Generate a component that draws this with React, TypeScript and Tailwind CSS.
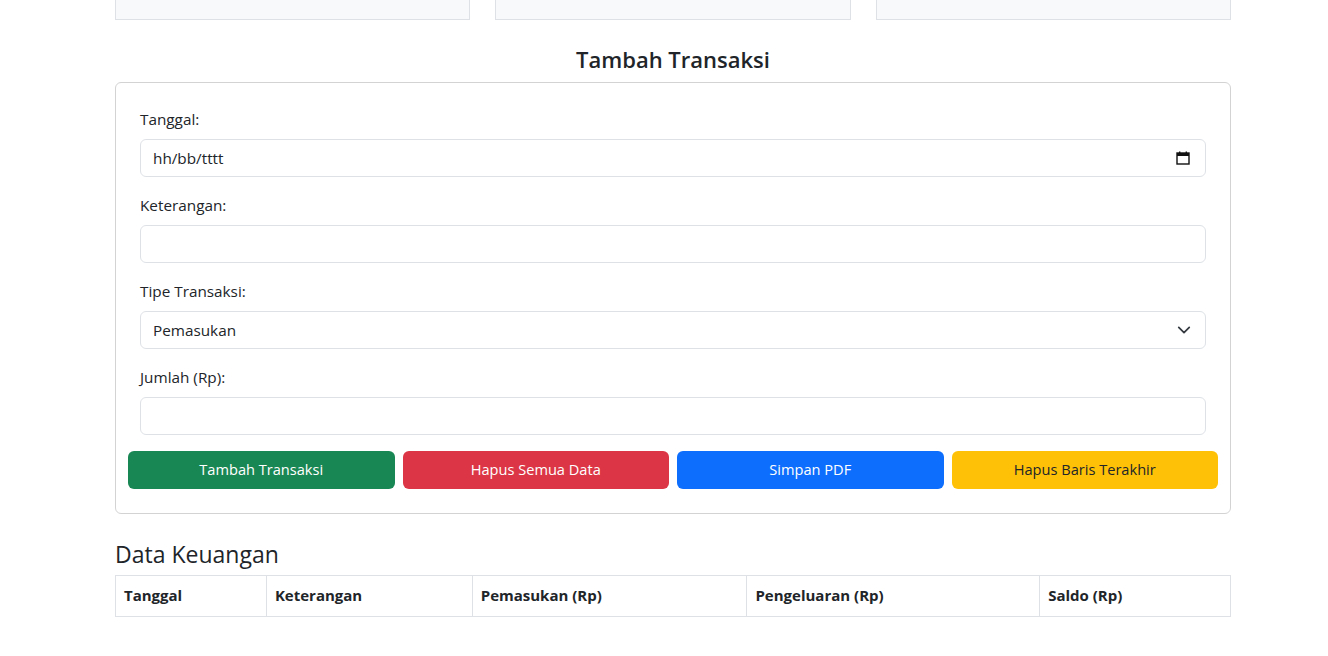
import React from "react";

const summaryCards = [
  { title: "Total Pemasukan", value: "Rp 0" },
  { title: "Total Pengeluaran", value: "Rp 0" },
  { title: "Saldo Akhir", value: "Rp 0" },
];

const actionButtons = [
  { label: "Tambah Transaksi", cls: "bg-[#198754] text-white" },
  { label: "Hapus Semua Data", cls: "bg-[#dc3545] text-white" },
  { label: "Simpan PDF", cls: "bg-[#0d6efd] text-white" },
  { label: "Hapus Baris Terakhir", cls: "bg-[#ffc107] text-[#212529]" },
];

const columns = [
  { label: "Tanggal", w: "w-[151px]" },
  { label: "Keterangan", w: "w-[206px]" },
  { label: "Pemasukan (Rp)", w: "w-[275px]" },
  { label: "Pengeluaran (Rp)", w: "w-[293px]" },
  { label: "Saldo (Rp)", w: "w-[191px]" },
];

const CalendarIcon = () => (
  <svg width="14" height="14" viewBox="0 0 14 14" fill="none">
    <rect x="1" y="2" width="12" height="11" stroke="#111" strokeWidth="1.4" fill="none" />
    <rect x="1" y="2" width="12" height="3" fill="#111" />
    <rect x="3" y="0.5" width="1.4" height="2" fill="#111" />
    <rect x="9.6" y="0.5" width="1.4" height="2" fill="#111" />
  </svg>
);

const Chevron = () => (
  <svg width="14" height="14" viewBox="0 0 16 16" fill="none">
    <path d="M2 5l6 6 6-6" stroke="#343a40" strokeWidth="2" strokeLinecap="round" strokeLinejoin="round" />
  </svg>
);

const Field = ({ label, children }: { label: string; children: React.ReactNode }) => (
  <div className="mb-4">
    <label className="block mb-2 leading-6">{label}</label>
    {children}
  </div>
);

export default function App() {
  return (
    <div
      className="min-h-screen bg-white text-[#212529] text-[15.3px] overflow-hidden"
      style={{ fontFamily: '"Open Sans", "Noto Sans", sans-serif' }}
    >
      <div className="ml-[115px] w-[1116px]">
        {/* ringkasan */}
        <div className="grid grid-cols-3 gap-[25px] -mt-[80px]">
          {summaryCards.map((c) => (
            <div
              key={c.title}
              className="h-[100px] bg-[#f8f9fa] border border-[#dee2e6] flex flex-col items-center justify-end pb-[17px]"
            >
              <p className="font-semibold leading-6">{c.title}</p>
              <p className="leading-6 pl-[62px]">{c.value}</p>
            </div>
          ))}
        </div>

        <h3 className="text-center text-[22px] font-semibold leading-[29px] mt-[25px] mb-[8px]">
          Tambah Transaksi
        </h3>

        <div className="border border-[#d3d3d3] rounded-md p-[24px]">
          <Field label="Tanggal:">
            <div className="h-[38px] border border-[#dee2e6] rounded-md pl-3 pr-[15px] flex items-center justify-between">
              <span>hh/bb/tttt</span>
              <CalendarIcon />
            </div>
          </Field>
          <Field label="Keterangan:">
            <input
              type="text"
              className="w-full h-[38px] border border-[#dee2e6] rounded-md px-3 outline-none"
            />
          </Field>
          <Field label="Tipe Transaksi:">
            <div className="h-[38px] border border-[#dee2e6] rounded-md pl-3 pr-[14px] flex items-center justify-between">
              <span>Pemasukan</span>
              <Chevron />
            </div>
          </Field>
          <Field label="Jumlah (Rp):">
            <input
              type="text"
              className="w-full h-[38px] border border-[#dee2e6] rounded-md px-3 outline-none"
            />
          </Field>
          <div className="grid grid-cols-4 gap-2 -mx-3">
            {actionButtons.map((b) => (
              <button key={b.label} className={`h-[38px] rounded-md text-[14.6px] ${b.cls}`}>
                {b.label}
              </button>
            ))}
          </div>
        </div>

        <h4 className="text-[23px] font-medium leading-[29px] mt-[26px] mb-[6px]">Data Keuangan</h4>

        <table className="w-full border-collapse">
          <thead>
            <tr>
              {columns.map((c) => (
                <th
                  key={c.label}
                  className={`${c.w} border border-[#dee2e6] text-left font-bold text-[15px] px-2 h-[41px] leading-[22px] pb-[2px]`}
                >
                  {c.label}
                </th>
              ))}
            </tr>
          </thead>
        </table>
      </div>
    </div>
  );
}
